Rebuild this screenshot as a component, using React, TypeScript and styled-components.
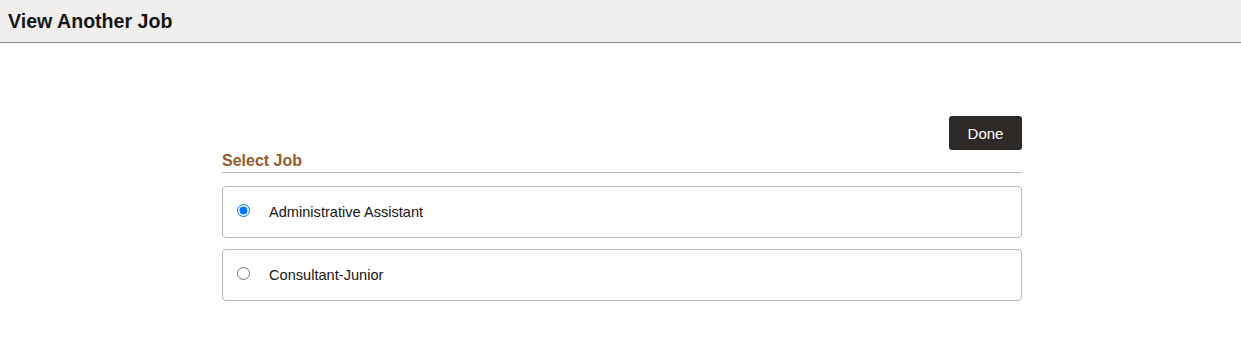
import React, { useState } from 'react';
import styled, { createGlobalStyle } from 'styled-components';

const GlobalStyle = createGlobalStyle`
  body {
    margin: 0;
    background: #ffffff;
    font-family: "Liberation Sans", Arial, sans-serif;
    color: #000000;
  }
`;

const Header = styled.header`
  height: 42px;
  background: #f0efed;
  border-bottom: 1px solid #8a8782;
  display: flex;
  align-items: center;
  padding: 0 8px;
`;

const Title = styled.h1`
  margin: 0;
  font-size: 19.6px;
  font-weight: bold;
  color: #161616;
`;

const Content = styled.main`
  width: 800px;
  margin: 73px auto 0 222px;
  display: flex;
  flex-direction: column;
`;

const Actions = styled.div`
  display: flex;
  justify-content: flex-end;
`;

const DoneButton = styled.button`
  width: 73px;
  height: 34px;
  border: none;
  border-radius: 3px;
  background: #2d2926;
  color: #ffffff;
  font-family: "Liberation Sans", Arial, sans-serif;
  font-size: 15px;
  cursor: pointer;
`;

const SectionTitle = styled.h2`
  margin: 2px 0 0;
  padding-bottom: 2px;
  font-size: 16px;
  font-weight: bold;
  color: #9b5a2c;
  border-bottom: 1px solid #bcb8b4;
`;

const List = styled.div`
  display: flex;
  flex-direction: column;
  gap: 11px;
  margin-top: 13px;
`;

const Option = styled.label`
  height: 52px;
  box-sizing: border-box;
  border: 1px solid #b9b9b9;
  border-radius: 4px;
  display: flex;
  align-items: center;
  padding-left: 14px;
  font-size: 14.6px;
  color: #161616;
  cursor: pointer;
`;

const Radio = styled.input`
  width: 13px;
  height: 13px;
  margin: 0 19px 0 0;
  position: relative;
  top: -2px;
`;

const jobs = ['Administrative Assistant', 'Consultant-Junior'];

export default function App() {
  const [selected, setSelected] = useState(jobs[0]);
  return (
    <>
      <GlobalStyle />
      <Header>
        <Title>View Another Job</Title>
      </Header>
      <Content>
        <Actions>
          <DoneButton>Done</DoneButton>
        </Actions>
        <SectionTitle>Select Job</SectionTitle>
        <List>
          {jobs.map((job) => (
            <Option key={job}>
              <Radio
                type="radio"
                name="job"
                checked={selected === job}
                onChange={() => setSelected(job)}
              />
              {job}
            </Option>
          ))}
        </List>
      </Content>
    </>
  );
}
